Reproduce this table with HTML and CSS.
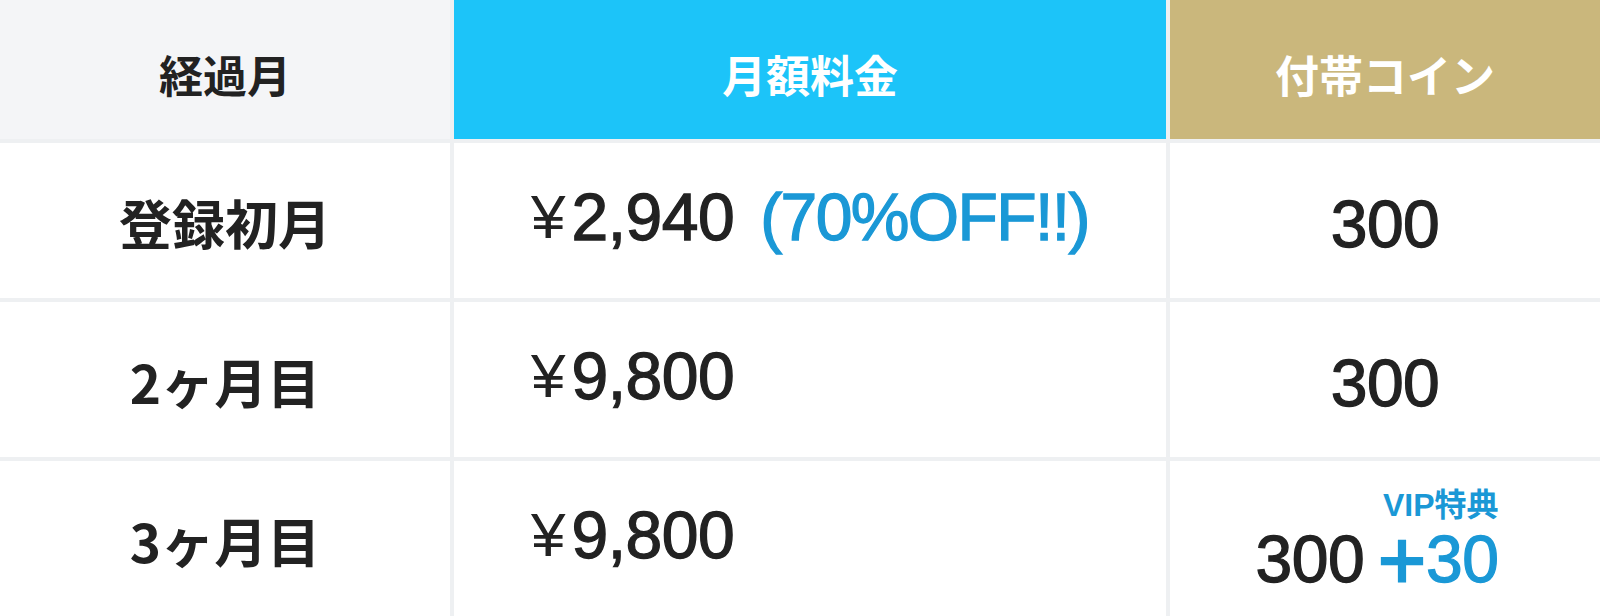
FILE: index.html
```html
<!DOCTYPE html>
<html lang="ja">
<head>
<meta charset="utf-8">
<title>料金表</title>
<link rel="stylesheet" href="styles.css">
</head>
<body>
<div class="table">
  <div class="head head-month">経過月</div>
  <div class="head head-price">月額料金</div>
  <div class="head head-coin">付帯コイン</div>

  <div class="cell label">登録初月</div>
  <div class="cell price"><span class="yen">¥</span><span class="num">2,940</span><span class="off">(70%OFF!!)</span></div>
  <div class="cell coin"><span class="num">300</span></div>

  <div class="cell label">2ヶ月目</div>
  <div class="cell price"><span class="yen">¥</span><span class="num">9,800</span></div>
  <div class="cell coin"><span class="num">300</span></div>

  <div class="cell label">3ヶ月目</div>
  <div class="cell price"><span class="yen">¥</span><span class="num">9,800</span></div>
  <div class="cell coin">
    <div class="vip-block">
      <span class="vip">VIP特典</span>
      <span class="sum"><span class="num">300</span><span class="plus">＋</span><span class="num bonus">30</span></span>
    </div>
  </div>
</div>
</body>
</html>
```
FILE: styles.css
```css
html, body {
  margin: 0;
  padding: 0;
  background: #ffffff;
}

.table {
  display: grid;
  grid-template-columns: 450px 712px 430px;
  grid-template-rows: 139px repeat(3, 155px);
  gap: 4px;
  width: 1600px;
  height: 616px;
  background: #eef0f2;
  font-family: "Noto Sans CJK JP", sans-serif;
  color: #222222;
}

.head {
  display: flex;
  align-items: center;
  justify-content: center;
  padding-top: 8px;
  box-sizing: border-box;
  font-size: 44px;
  font-weight: 700;
  line-height: 1;
}

.head-month {
  background: #f4f5f7;
  color: #222222;
}

.head-price {
  background: #1cc4f9;
  color: #ffffff;
}

.head-coin {
  background: #cab77c;
  color: #ffffff;
}

.cell {
  background: #ffffff;
  display: flex;
  align-items: center;
  box-sizing: border-box;
}

.label {
  justify-content: center;
  font-size: 53px;
  font-weight: 700;
  line-height: 1;
  padding-top: 4px;
}

.price {
  justify-content: flex-start;
  padding-left: 77px;
  padding-bottom: 8px;
  font-family: "Liberation Sans", Arial, sans-serif;
  font-size: 66px;
  line-height: 1;
}

.yen {
  margin-right: 6px;
  font-size: 62px;
}

.num {
  font-family: "Liberation Sans", Arial, sans-serif;
  font-size: 66px;
  line-height: 1;
  -webkit-text-stroke: 1.3px currentColor;
  letter-spacing: -0.5px;
}

.off {
  margin-left: 26px;
  color: #1a98d6;
  letter-spacing: -1.6px;
  -webkit-text-stroke: 1.3px currentColor;
}

.coin {
  justify-content: center;
  padding-top: 6px;
}

.vip-block {
  display: inline-flex;
  flex-direction: column;
  align-items: flex-end;
  margin-right: 16px;
  margin-top: -2px;
}

.vip {
  font-family: "Liberation Sans", "Noto Sans CJK JP", sans-serif;
  font-size: 32px;
  font-weight: 700;
  line-height: 1;
  color: #1a98d6;
  margin-bottom: 5px;
}

.sum {
  display: flex;
  align-items: baseline;
}

.plus {
  font-family: "Noto Sans CJK JP", sans-serif;
  font-size: 56px;
  font-weight: 700;
  line-height: 1;
  color: #1a98d6;
  -webkit-text-stroke: 2.5px currentColor;
  margin: 0 -4px 0 10px;
}

.bonus {
  color: #1a98d6;
}
```
